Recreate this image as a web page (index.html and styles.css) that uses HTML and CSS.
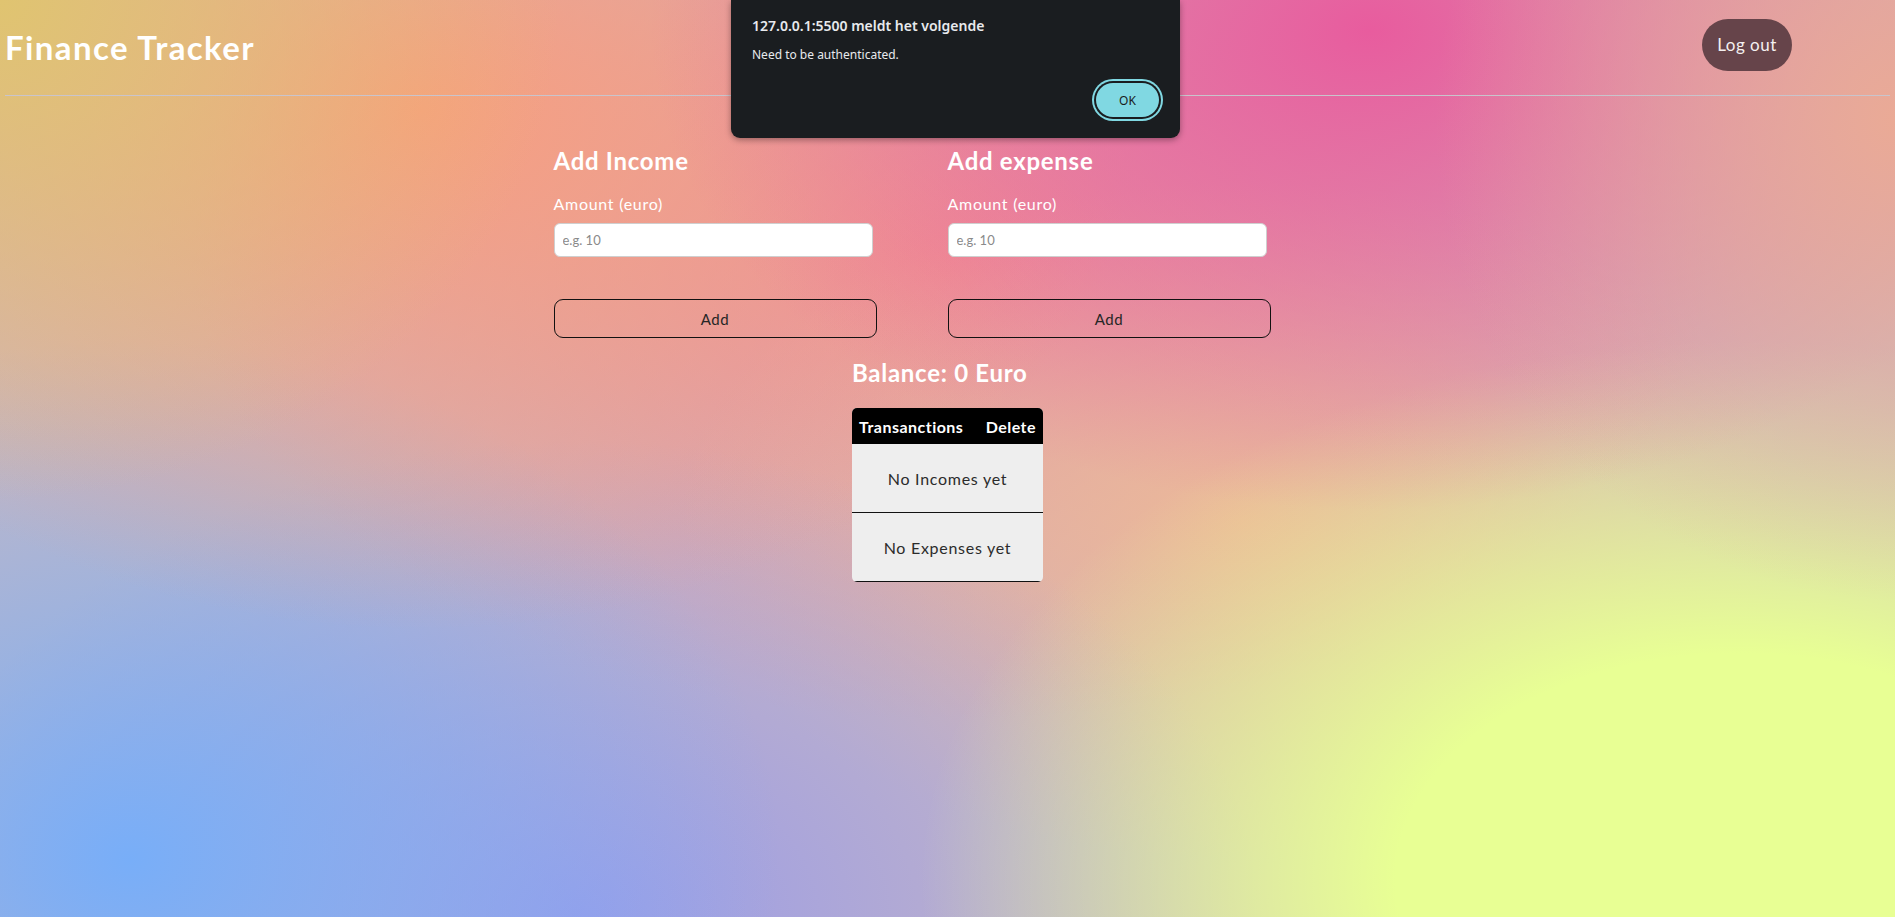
FILE: index.html
```html
<!DOCTYPE html>
<html lang="nl">
<head>
<meta charset="utf-8">
<title>Finance Tracker</title>
<link rel="stylesheet" href="styles.css">
</head>
<body>
<header class="topbar">
  <h1 class="brand">Finance Tracker</h1>
  <button class="logout">Log out</button>
</header>

<main class="content">
  <section class="forms">
    <form class="entry">
      <h2 class="entry-title">Add Income</h2>
      <label class="entry-label">Amount (euro)</label>
      <input class="entry-input" type="text" placeholder="e.g. 10">
      <button class="entry-btn" type="button">Add</button>
    </form>
    <form class="entry">
      <h2 class="entry-title">Add expense</h2>
      <label class="entry-label">Amount (euro)</label>
      <input class="entry-input" type="text" placeholder="e.g. 10">
      <button class="entry-btn" type="button">Add</button>
    </form>
  </section>

  <section class="summary">
    <div class="summary-inner">
      <h2 class="balance">Balance: 0 Euro</h2>
      <table class="ledger">
        <thead>
          <tr><th>Transanctions</th><th>Delete</th></tr>
        </thead>
        <tbody>
          <tr><td colspan="2">No Incomes yet</td></tr>
          <tr><td colspan="2">No Expenses yet</td></tr>
        </tbody>
      </table>
    </div>
  </section>
</main>

<div class="alert" role="alertdialog">
  <div class="alert-title">127.0.0.1:5500 meldt het volgende</div>
  <div class="alert-msg">Need to be authenticated.</div>
  <div class="alert-actions">
    <button class="alert-ok">OK</button>
  </div>
</div>
</body>
</html>
```

FILE: styles.css
```css
html, body {
  height: 100%;
}
body {
  margin: 0;
  font-family: Lato, "Open Sans", sans-serif;
  letter-spacing: 0.045em;
  color: #fff;
  background-color: #cab8c0;
  background-image:
    radial-gradient(ellipse 560px 500px at 0px 0px, #e0c470 0%, rgba(224, 196, 112, 0) 100%),
    radial-gradient(ellipse 460px 480px at 1895px 120px, #eaaa96 0%, rgba(234, 170, 150, 0) 100%),
    radial-gradient(ellipse 720px 480px at 1370px 30px, #e85c9e 0%, rgba(232, 92, 158, 0) 100%),
    radial-gradient(ellipse 720px 520px at 420px 110px, #f89e7e 0%, rgba(248, 158, 126, 0) 100%),
    radial-gradient(ellipse 820px 540px at 1740px 880px, #e8ff94 0%, #e8ff94 42%, rgba(232, 255, 148, 0) 100%),
    radial-gradient(ellipse 650px 520px at 130px 860px, #78aef8 0%, rgba(120, 174, 248, 0) 100%),
    radial-gradient(ellipse 680px 480px at 580px 920px, #9a9ce8 0%, rgba(154, 156, 232, 0) 100%),
    radial-gradient(ellipse 560px 340px at 1240px 520px, #ecb898 0%, rgba(236, 184, 152, 0) 100%),
    radial-gradient(ellipse 760px 460px at 950px 260px, #ee8e98 0%, rgba(238, 142, 152, 0) 100%);
  overflow: hidden;
}

.topbar {
  display: flex;
  align-items: center;
  justify-content: space-between;
  height: 95px;
  margin: 0 5px;
  padding-right: 98px;
  border-bottom: 1px solid #c9c4cc;
}
.brand {
  margin: 0;
  font-size: 33px;
  font-weight: 700;
  letter-spacing: 0.042em;
  margin-top: -2px;
}
.logout {
  width: 90px;
  height: 52px;
  border: none;
  border-radius: 26px;
  background: #66444a;
  color: #f4f0f0;
  font-family: inherit;
  letter-spacing: 0.03em;
  font-size: 17px;
  margin-top: -6px;
}

.content {
  display: flex;
  flex-direction: column;
  align-items: center;
}

.forms {
  display: grid;
  grid-template-columns: 394px 394px;
  padding-top: 50px;
}
.entry {
  display: flex;
  flex-direction: column;
  width: 323px;
}
.entry-title {
  margin: 0;
  font-size: 24px;
  font-weight: 700;
  line-height: 30px;
}
.entry-label {
  margin-top: 18px;
  font-size: 16px;
  line-height: 20px;
}
.entry-input {
  margin-top: 9px;
  width: 319px;
  height: 34px;
  box-sizing: border-box;
  border: 1px solid #cfcfcf;
  border-radius: 6px;
  padding: 0 8px;
  font-family: inherit;
  font-size: 13px;
  background: #fff;
}
.entry-input::placeholder {
  color: #8a8a8a;
}
.entry-btn {
  margin-top: 42px;
  height: 39px;
  width: 323px;
  border: 1px solid #111;
  border-radius: 9px;
  background: transparent;
  color: #262626;
  font-family: inherit;
  font-weight: 400;
  letter-spacing: 0.04em;
  font-size: 15px;
}

.summary {
  padding-top: 20px;
}
.summary-inner {
  display: flex;
  flex-direction: column;
}
.balance {
  margin: 0;
  font-size: 24px;
  font-weight: 700;
  line-height: 30px;
}
.ledger {
  margin-top: 20px;
  width: 191px;
  border-collapse: separate;
  border-spacing: 0;
  background: #eeeeee;
  border-radius: 5px;
  overflow: hidden;
  color: #222;
}
.ledger th {
  background: #000;
  color: #fff;
  height: 36px;
  padding: 0 7px;
  font-size: 16px;
  font-weight: 700;
  letter-spacing: 0.03em;
  text-align: left;
}
.ledger th + th {
  text-align: right;
}
.ledger td {
  height: 66px;
  text-align: center;
  font-size: 16px;
  font-weight: 400;
  color: #2b2b2b;
  border-bottom: 1px solid #111;
}

.alert {
  position: absolute;
  top: 0;
  left: 731px;
  width: 449px;
  height: 138px;
  box-sizing: border-box;
  padding: 16px 21px 0;
  background: #1a1d20;
  border-radius: 0 0 9px 9px;
  box-shadow: 0 2px 6px rgba(0, 0, 0, 0.35);
  font-family: "Noto Sans", "Open Sans", sans-serif;
  letter-spacing: 0;
  color: #e8eaed;
}
.alert-title {
  font-size: 14px;
  font-weight: 600;
  line-height: 20px;
}
.alert-msg {
  margin-top: 11px;
  font-size: 12px;
  line-height: 16px;
}
.alert-actions {
  display: flex;
  justify-content: flex-end;
  margin-top: 20px;
}
.alert-ok {
  width: 63px;
  height: 34px;
  border: none;
  border-radius: 17px;
  background: #80d8e2;
  color: #1a1d20;
  font-family: inherit;
  font-size: 12px;
  box-shadow: 0 0 0 2px #1a1d20, 0 0 0 4px #80d8e2;
}
```
